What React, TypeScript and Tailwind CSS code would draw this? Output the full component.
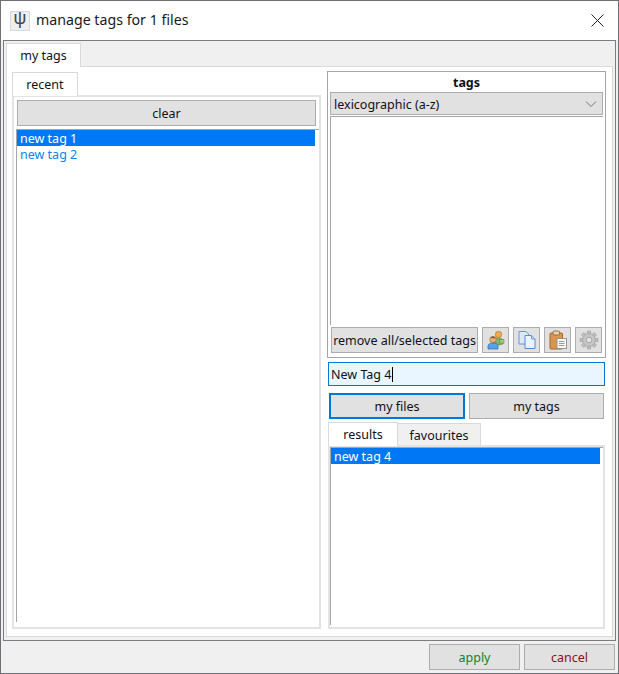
import React from "react";

function Users() {
  return (
    <svg width="20" height="20" viewBox="0 0 20 20">
      <circle cx="12.5" cy="4.5" r="3.2" fill="#eda94f" stroke="#b9782e" strokeWidth="0.7" />
      <path d="M8 15V10.5C8 9 10 8 12.5 8S17 9 17 10.5V14L13 15Z" fill="#86b56a" stroke="#5f8a47" strokeWidth="0.7" />
      <rect x="13.5" y="9.5" width="4.5" height="3.5" fill="#9ccb80" stroke="#5f8a47" strokeWidth="0.5" />
      <circle cx="7" cy="9.5" r="3.2" fill="#eeb070" stroke="#9a6a38" strokeWidth="0.7" />
      <path d="M5 8C5.5 6.3 8.5 6.3 9.3 8.3L6.5 8.2Z" fill="#7b5230" />
      <path d="M2 19V16C2 14 4 13 7 13S12 14 12 16V19Z" fill="#5aa2e8" stroke="#33699f" strokeWidth="0.7" />
    </svg>
  );
}

function Copy() {
  return (
    <svg width="20" height="20" viewBox="0 0 20 20">
      <path d="M2 1.5H9L11.5 4V14H2Z" fill="#dbe8fb" stroke="#6f94d6" strokeWidth="1" />
      <path d="M8 5.5H14.5L18 9V18.5H8Z" fill="#eaf2fe" stroke="#5c87d2" strokeWidth="1" />
      <path d="M14.5 5.5V9H18" fill="#c5d8f6" stroke="#5c87d2" strokeWidth="0.8" />
    </svg>
  );
}

function Paste() {
  return (
    <svg width="20" height="20" viewBox="0 0 20 20">
      <rect x="2" y="3" width="12.5" height="16" rx="1" fill="#d9964f" stroke="#a5652a" strokeWidth="1" />
      <rect x="5" y="1" width="6.5" height="4" rx="1" fill="#e8d2ad" stroke="#8b5f30" strokeWidth="0.8" />
      <rect x="9" y="8.5" width="9.5" height="10" fill="#f7f7f5" stroke="#8d8d8d" strokeWidth="0.9" />
      <path d="M11 11.5H16.5M11 13.5H16.5M11 15.5H16.5" stroke="#8d8d8d" strokeWidth="0.9" />
    </svg>
  );
}

function Gear() {
  const teeth = [0, 45, 90, 135, 180, 225, 270, 315];
  return (
    <svg width="20" height="20" viewBox="0 0 20 20">
      {teeth.map((a) => (
        <rect key={a} x="8.2" y="1" width="3.6" height="4" fill="#bdbdbd" stroke="#a0a0a0" strokeWidth="0.5" transform={`rotate(${a} 10 10)`} />
      ))}
      <circle cx="10" cy="10" r="6.4" fill="#c6c6c6" stroke="#a3a3a3" strokeWidth="0.8" />
      <circle cx="10" cy="10" r="2.8" fill="#e4e4e4" stroke="#9c9c9c" strokeWidth="0.8" />
    </svg>
  );
}

function IconButton({ children }: { children: React.ReactNode }) {
  return (
    <div className="w-[27px] h-[26px] bg-[#e1e1e1] border border-[#adadad] flex items-center justify-center">
      {children}
    </div>
  );
}

function Button({ children, className }: { children: React.ReactNode; className: string }) {
  return (
    <div className={`bg-[#e1e1e1] flex items-center justify-center whitespace-nowrap pt-[2px] ${className}`}>
      {children}
    </div>
  );
}

export default function App() {
  return (
    <div className="w-[619px] h-[674px] flex flex-col bg-[#f0f0f0] border border-[#6f7076] text-[12.5px] leading-[14px] text-[#10101a] font-['Noto_Sans',sans-serif] overflow-hidden">
      <div className="h-[39px] bg-white flex items-center shrink-0 pl-[9px] pr-[14px]">
        <div className="w-[20px] h-[20px] bg-[#efefef] border border-[#d9d9d9] flex items-center justify-center pb-[5px] text-[18px] leading-[14px] text-[#444] font-['Liberation_Sans',sans-serif]">
          ψ
        </div>
        <span className="ml-[6px] text-[14.2px] leading-[18px] pb-[2px] text-[#1a1a1a] flex-1">manage tags for 1 files</span>
        <svg width="13" height="13" viewBox="0 0 13 13">
          <path d="M0.5 0.5L12.5 12.5M12.5 0.5L0.5 12.5" stroke="#222" strokeWidth="1" fill="none" />
        </svg>
      </div>

      <div className="mx-[2px] h-[601px] w-[613px] border border-[#7b7c82] shrink-0 flex flex-col pt-[2px] px-[2px] pb-[3px]">
        <div className="flex h-[23px] shrink-0">
          <div className="w-[75px] h-[24px] z-10 bg-white border border-b-0 border-[#d9d9d9] flex items-center justify-center">my tags</div>
        </div>
        <div className="flex-1 min-h-0 bg-white border border-[#d9d9d9] flex pt-[4px] pl-[5px] pb-[7px] gap-[6px]">
          <div className="w-[309px] flex flex-col mt-[1px]">
            <div className="h-[23px] shrink-0 flex">
              <div className="w-[66px] h-[24px] z-10 bg-white border border-b-0 border-[#d9d9d9] flex items-center justify-center">recent</div>
            </div>
            <div className="flex-1 min-h-0 border-2 border-[#e3e3e3] flex flex-col pt-[3px] pl-[2px] pb-[5px]">
              <Button className="h-[26px] w-[299px] ml-[1px] shrink-0 border border-[#adadad]">clear</Button>
              <div className="mt-[3px] flex-1 min-h-0 border-l border-t border-[#a6a6a6]">
                <div className="h-[16px] w-[298px] bg-[#0078f5] text-white pl-[3px] pt-[2px] flex items-center">new tag 1</div>
                <div className="h-[16px] pl-[3px] pt-[2px] text-[#0a84e6] flex items-center">new tag 2</div>
              </div>
            </div>
          </div>

          <div className="w-[279px] flex flex-col">
            <div className="h-[287px] shrink-0 border border-[#a6a6a6] px-[2px] flex flex-col">
              <div className="h-[20px] shrink-0 pt-[2px] flex items-center justify-center font-bold">tags</div>
              <div className="h-[23px] shrink-0 bg-[#e1e1e1] border border-[#adadad] flex items-center pl-[3px] pr-[5px] justify-between">
                <span className="pt-[2px]">lexicographic (a-z)</span>
                <svg width="12" height="8" viewBox="0 0 12 8"><path d="M1 1.5L6 6.5L11 1.5" stroke="#777" strokeWidth="1" fill="none" /></svg>
              </div>
              <div className="flex-1 min-h-0 mt-[1px] mb-[2px] border-l border-t border-[#a6a6a6]" />
              <div className="h-[30px] shrink-0 flex items-start gap-[4px] pl-[1px]">
                <Button className="w-[147px] h-[26px] border border-[#adadad]">remove all/selected tags</Button>
                <IconButton><Users /></IconButton>
                <IconButton><Copy /></IconButton>
                <IconButton><Paste /></IconButton>
                <IconButton><Gear /></IconButton>
              </div>
            </div>
            <div className="mt-[4px] ml-[1px] w-[277px] h-[24px] shrink-0 bg-[#e9f6ff] border border-[#0078d7] flex items-center pl-[2px]">
              <span className="pt-[2px]">New Tag 4</span><span className="inline-block w-[1px] h-[15px] bg-black ml-[1px]" />
            </div>
            <div className="mt-[7px] ml-[2px] flex gap-[4px] h-[26px] shrink-0">
              <Button className="w-[136px] border-2 border-[#0078d7]">my files</Button>
              <Button className="w-[135px] border border-[#adadad]">my tags</Button>
            </div>
            <div className="mt-[3px] ml-[1px] h-[23px] shrink-0 flex items-end">
              <div className="w-[70px] h-[24px] -mb-[1px] z-10 bg-white border border-b-0 border-[#d9d9d9] flex items-center justify-center">results</div>
              <div className="w-[83px] h-[22px] bg-[#f0f0f0] border border-b-0 border-l-0 border-[#d9d9d9] pt-[2px] flex items-center justify-center">favourites</div>
            </div>
            <div className="flex-1 min-h-0 ml-[1px] w-[277px] border-2 border-[#e3e3e3] pb-[2px]">
              <div className="h-full border-l border-t border-[#a6a6a6]">
                <div className="h-[16px] w-[269px] bg-[#0078f5] text-white pl-[3px] pt-[2px] flex items-center">new tag 4</div>
              </div>
            </div>
          </div>
        </div>
      </div>

      <div className="flex-1 flex justify-end items-start gap-[4px] pt-[3px] pr-[3px]">
        <Button className="w-[91px] h-[26px] text-[#15802a] border border-[#adadad]">apply</Button>
        <Button className="w-[91px] h-[26px] text-[#8a1020] border border-[#adadad]">cancel</Button>
      </div>
    </div>
  );
}
